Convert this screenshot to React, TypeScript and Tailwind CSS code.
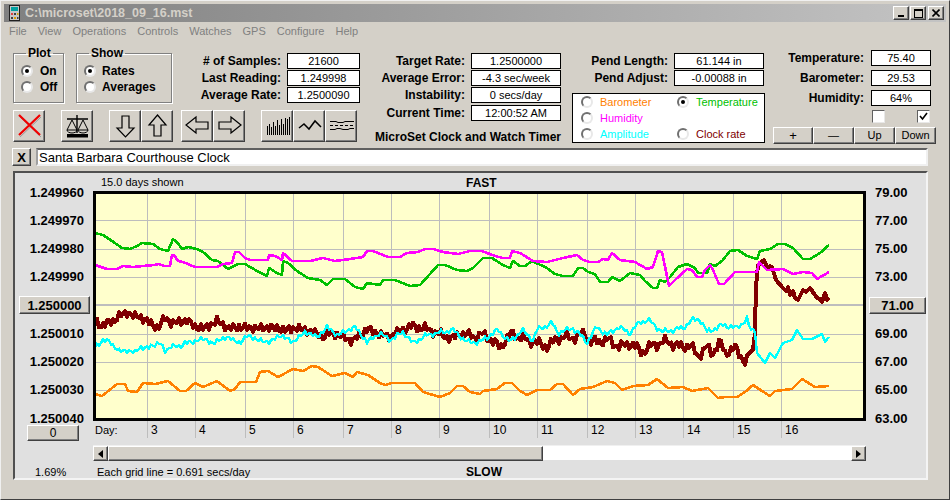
import type { ReactNode } from "react"

type Pt = [number, number]

const green: Pt[] = [[95,233],[103,235],[112,241],[122,248],[130,249],[137,246],[142,243],[153,244],[160,249],[168,251],[173,239],[177,242],[182,249],[188,247],[197,249],[203,252],[212,260],[218,261],[228,269],[238,264],[245,264],[257,271],[267,276],[269,268],[277,273],[282,275],[283,261],[288,263],[297,271],[308,278],[320,280],[327,285],[333,279],[345,279],[355,287],[363,289],[367,283],[380,285],[383,280],[395,280],[410,286],[420,285],[430,274],[438,265],[445,265],[457,270],[467,271],[473,268],[483,258],[492,258],[503,265],[510,268],[513,261],[520,266],[525,266],[532,261],[547,268],[555,274],[563,276],[573,276],[578,268],[583,268],[588,272],[595,274],[600,282],[608,282],[612,277],[620,281],[630,273],[640,275],[645,281],[653,288],[657,288],[660,280],[665,282],[670,277],[678,267],[687,264],[695,268],[698,273],[707,273],[710,264],[715,266],[722,261],[730,251],[738,250],[747,256],[757,259],[760,251],[770,249],[778,244],[785,244],[793,248],[803,259],[810,259],[820,253],[829,245]]

const magenta: Pt[] = [[95,265],[107,269],[117,269],[123,266],[133,267],[143,266],[155,265],[158,264],[165,266],[170,266],[172,255],[174,255],[178,261],[183,262],[195,267],[217,267],[223,264],[232,263],[235,252],[239,252],[245,258],[250,260],[268,260],[269,255],[275,256],[282,260],[283,253],[292,261],[303,261],[310,261],[323,258],[335,261],[350,259],[363,257],[367,251],[373,251],[388,257],[400,257],[407,253],[418,252],[425,249],[433,249],[443,252],[458,254],[470,251],[482,251],[495,256],[503,258],[510,258],[512,251],[520,253],[533,261],[547,262],[563,258],[577,255],[583,260],[590,262],[598,262],[603,259],[608,260],[612,253],[620,260],[635,262],[647,269],[653,267],[658,251],[662,252],[669,286],[675,280],[687,269],[692,270],[697,277],[702,277],[705,270],[710,265],[713,270],[719,284],[724,284],[735,272],[757,272],[759,262],[767,270],[783,269],[793,274],[803,272],[812,273],[817,279],[829,272]]

const orange: Pt[] = [[95,394],[102,396],[107,392],[117,384],[125,384],[128,391],[137,392],[143,383],[155,384],[168,381],[180,391],[186,391],[195,383],[203,387],[217,381],[230,391],[235,389],[240,382],[256,382],[260,372],[268,371],[278,377],[293,369],[303,371],[312,366],[318,367],[332,376],[345,373],[353,377],[357,372],[368,375],[380,383],[385,385],[392,383],[415,383],[423,392],[440,397],[450,393],[457,386],[463,386],[470,392],[480,394],[483,391],[497,389],[505,383],[512,383],[520,391],[527,395],[537,390],[550,390],[557,384],[563,384],[573,395],[580,389],[593,387],[607,381],[615,383],[622,390],[633,386],[648,385],[657,379],[668,388],[683,387],[692,391],[708,388],[718,398],[725,397],[737,397],[745,392],[753,385],[762,391],[770,396],[775,391],[792,389],[802,379],[815,387],[829,386]]

const redBase: Pt[] = [[95,320],[102,326],[110,322],[117,318],[127,312],[135,317],[140,316],[148,322],[158,328],[165,318],[172,323],[180,322],[187,320],[195,327],[205,328],[217,321],[228,328],[240,327],[250,328],[262,328],[270,327],[285,330],[295,328],[310,331],[325,337],[330,332],[353,341],[367,329],[387,337],[412,326],[427,329],[453,339],[460,333],[477,337],[483,334],[500,347],[512,333],[523,339],[535,342],[548,347],[557,338],[577,337],[585,333],[590,342],[608,340],[620,347],[630,343],[642,352],[653,345],[668,341],[678,347],[690,345],[698,356],[707,347],[712,354],[720,342],[725,353],[735,348],[746,363],[750,352],[754,352]]
const redTail: Pt[] = [[755,333],[755,328],[756,287],[758,265],[764,260],[768,269],[770,266],[772,267],[776,280],[783,288],[786,291],[788,287],[790,295],[793,291],[795,298],[798,300],[803,290],[806,292],[810,288],[815,295],[817,298],[820,299],[822,302],[825,293],[827,300],[829,298]]

const cyanBase: Pt[] = [[95,347],[103,340],[110,342],[120,352],[128,350],[135,353],[140,347],[148,348],[160,342],[165,352],[172,345],[180,348],[185,342],[193,343],[200,338],[213,343],[227,337],[233,340],[240,343],[248,335],[257,340],[270,342],[280,335],[293,342],[305,332],[318,337],[327,327],[337,335],[355,327],[367,342],[380,333],[390,340],[403,332],[413,343],[427,335],[453,330],[467,342],[480,342],[498,330],[510,342],[522,330],[533,340],[537,330],[552,323],[558,333],[573,328],[587,342],[597,327],[607,335],[618,327],[630,333],[640,322],[648,320],[663,332],[683,328],[692,320],[700,319],[707,332],[723,325],[737,328],[747,319],[750,330],[756,330]]
const cyanTail: Pt[] = [[757,353],[765,363],[770,353],[775,358],[783,343],[792,340],[797,330],[803,339],[812,339],[822,334],[825,342],[829,337]]

// base trace plus a fixed wobble, the raw readings are too noisy to trace by hand
function wobble(base: Pt[], amp: number, step: number): Pt[] {
  const out: Pt[] = []
  let j = 0
  for (let x = base[0][0]; x <= base[base.length - 1][0]; x += step) {
    while (j < base.length - 2 && base[j + 1][0] < x) j++
    const [x0, y0] = base[j]
    const [x1, y1] = base[j + 1]
    const y = y0 + ((y1 - y0) * (x - x0)) / (x1 - x0 || 1)
    const n = Math.sin(x * 1.15) + 0.6 * Math.sin(x * 0.45 + 1) + 0.3 * Math.sin(x * 2.7)
    out.push([x, y + amp * n])
  }
  return out
}

const toPoints = (pts: Pt[]) => pts.map((p) => p.join(",")).join(" ")

const days = [
  [147.5, 3], [195.5, 4], [245.5, 5], [293.5, 6], [343.5, 7], [391.5, 8], [439.5, 9],
  [489.5, 10], [537.5, 11], [587.5, 12], [635.5, 13], [683.5, 14], [733.5, 15], [781.5, 16],
]

const bevel = "border border-t-white border-l-white border-r-[#404040] border-b-[#404040] bg-[#d4d0c8] shadow-[inset_-1px_-1px_0_#808080]"

function Btn({ className, children }: { className: string; children?: ReactNode }) {
  return <div className={`${bevel} flex shrink-0 items-center justify-center ${className}`}>{children}</div>
}

function Radio({ on }: { on?: boolean }) {
  return (
    <span className="flex h-[12px] w-[12px] shrink-0 items-center justify-center rounded-full border-2 border-t-[#707070] border-l-[#707070] border-r-[#e8e8e8] border-b-[#e8e8e8] bg-white">
      {on && <span className="h-[4px] w-[4px] rounded-full bg-black" />}
    </span>
  )
}

function Readout({ label, value, labelW, boxW, className = "" }: { label: string; value: string; labelW: string; boxW: string; className?: string }) {
  return (
    <div className={`flex h-[16px] items-center ${className}`}>
      <span className={`whitespace-nowrap text-right text-[12px] font-bold ${labelW}`}>{label}</span>
      <span className={`ml-[6px] flex h-[16px] items-center justify-center border border-black bg-white ${boxW}`}>{value}</span>
    </div>
  )
}

function Group({ title, className, children }: { title: string; className: string; children: ReactNode }) {
  return (
    <fieldset className={`shrink-0 border border-[#808080] pl-[7px] text-[12px] font-bold shadow-[1px_1px_0_#fff,inset_1px_1px_0_#fff] ${className}`}>
      <legend className="ml-[5px] px-[2px] text-[12px] font-bold leading-[12px]">{title}</legend>
      {children}
    </fieldset>
  )
}

function AxisLabel({ children }: { children: ReactNode }) {
  return <span className="flex h-[14px] items-center">{children}</span>
}

function AppIcon() {
  return (
    <svg width="11" height="16" viewBox="0 0 11 16" className="shrink-0">
      <rect x="0.5" y="0.5" width="10" height="15" fill="#c8c8c8" stroke="#202020" />
      <rect x="2" y="2" width="7" height="4" fill="#00a0a0" />
      <rect x="2" y="8" width="2" height="2" fill="#e04040" />
      <rect x="5" y="8" width="2" height="2" fill="#404040" />
      <rect x="8" y="8" width="1.5" height="2" fill="#d0a000" />
      <rect x="2" y="12" width="2" height="2" fill="#404040" />
      <rect x="5" y="12" width="2" height="2" fill="#e0a000" />
      <rect x="8" y="12" width="1.5" height="2" fill="#404040" />
    </svg>
  )
}

function ToolIcon({ children }: { children: ReactNode }) {
  return (
    <svg width="30" height="30" viewBox="0 0 30 30" fill="none">
      {children}
    </svg>
  )
}

const arrowProps = { fill: "#d4d0c8", stroke: "#000", strokeWidth: 1.2, strokeLinejoin: "miter" as const }

export default function App() {
  return (
    <div className="flex h-[500px] w-[950px] flex-col overflow-hidden border border-t-[#f0f0f0] border-l-[#f0f0f0] border-r-[#404040] border-b-[#404040] bg-[#d4d0c8] px-[3px] pt-[3px] [font-family:Liberation_Sans,sans-serif] text-[11px] leading-none text-black">
      {/* title bar */}
      <div className="flex h-[18px] shrink-0 items-center bg-gradient-to-r from-[#808080] to-[#c4c4c4] pl-[5px] pr-[2px]">
        <AppIcon />
        <span className="ml-[5px] text-[12.5px] font-bold text-[#d4d0c8]">C:\microset\2018_09_16.mst</span>
        <div className="ml-auto flex">
          <Btn className="h-[14px] w-[16px] items-end pb-[2px]"><span className="h-[2px] w-[6px] bg-black" /></Btn>
          <Btn className="ml-[1px] h-[14px] w-[16px]"><span className="h-[9px] w-[9px] border border-t-2 border-black" /></Btn>
          <Btn className="ml-[2px] h-[14px] w-[16px]">
            <svg width="8" height="8" viewBox="0 0 8 8"><path d="M0.5 0.5L7.5 7.5M7.5 0.5L0.5 7.5" stroke="#000" strokeWidth="1.6" /></svg>
          </Btn>
        </div>
      </div>
      {/* menu */}
      <div className="flex h-[18px] shrink-0 items-center gap-[11px] pl-[5px] text-[#808080]">
        <span>File</span><span>View</span><span>Operations</span><span>Controls</span><span>Watches</span><span>GPS</span><span>Configure</span><span>Help</span>
      </div>

      {/* top controls */}
      <div className="flex h-[108px] shrink-0 pl-[9px]">
        <div className="w-[362px] shrink-0">
          <div className="flex h-[64px] pt-[7px]">
            <Group title="Plot" className="h-[56px] w-[51px]">
              <div className="flex items-center gap-[7px] pt-[6px]"><Radio on />On</div>
              <div className="mt-[4px] flex items-center gap-[7px]"><Radio />Off</div>
            </Group>
            <Group title="Show" className="ml-[12px] h-[56px] w-[96px]">
              <div className="flex items-center gap-[6px] pt-[6px]"><Radio on />Rates</div>
              <div className="mt-[4px] flex items-center gap-[6px]"><Radio />Averages</div>
            </Group>
            <div className="ml-[14px] flex flex-col gap-[1px] pt-[6px]">
              <Readout label="# of Samples:" value="21600" labelW="w-[95px]" boxW="w-[73px]" />
              <Readout label="Last Reading:" value="1.249998" labelW="w-[95px]" boxW="w-[73px]" />
              <Readout label="Average Rate:" value="1.2500090" labelW="w-[95px]" boxW="w-[73px]" />
            </div>
          </div>
          <div className="mt-[6px] flex h-[32px]">
            <Btn className="h-[32px] w-[32px]">
              <ToolIcon>
                <path d="M5 5L26 25M26 5L5 25" stroke="#9a9a9a" strokeWidth="1" transform="translate(1 1)" />
                <path d="M5 4L26 24M26 4L5 24" stroke="#f00000" strokeWidth="2.2" />
              </ToolIcon>
            </Btn>
            <Btn className="ml-[16px] h-[32px] w-[32px]">
              <ToolIcon>
                <path d="M15 4V22M5 8H26" stroke="#000" strokeWidth="1.4" />
                <path d="M10 9L5 19H15ZM21 9L16 19H26Z" stroke="#000" strokeWidth="1" fill="none" />
                <path d="M5 19a5 3 0 0 0 10 0M16 19a5 3 0 0 0 10 0" stroke="#000" strokeWidth="1" />
                <rect x="5" y="23" width="21" height="3.5" fill="#000" />
              </ToolIcon>
            </Btn>
            <Btn className="ml-[16px] h-[32px] w-[32px]">
              <ToolIcon><path d="M12 5H19V17H24L15.5 26L7 17H12Z" {...arrowProps} /></ToolIcon>
            </Btn>
            <Btn className="h-[32px] w-[32px]">
              <ToolIcon><path d="M15.5 4L24 14H19V25H12V14H7Z" {...arrowProps} /></ToolIcon>
            </Btn>
            <Btn className="ml-[8px] h-[32px] w-[32px]">
              <ToolIcon><path d="M4 14L14 6V11H26V18H14V22Z" {...arrowProps} /></ToolIcon>
            </Btn>
            <Btn className="h-[32px] w-[32px]">
              <ToolIcon><path d="M27 14L17 6V11H5V18H17V22Z" {...arrowProps} /></ToolIcon>
            </Btn>
            <Btn className="ml-[16px] h-[32px] w-[32px]">
              <ToolIcon>
                <path d="M5.5 15V24M7.5 13V24M9.5 16V24M11.5 11V24M13.5 15V24M15.5 9V24M17.5 14V24M19.5 8V24M21.5 13V24M23.5 7V24M25.5 8V24M27.5 6V24" stroke="#000" strokeWidth="1" />
              </ToolIcon>
            </Btn>
            <Btn className="h-[32px] w-[32px]">
              <ToolIcon><path d="M5 17L10 13L15 18L21 10L27 16" stroke="#000" strokeWidth="1.5" /></ToolIcon>
            </Btn>
            <Btn className="h-[32px] w-[32px]">
              <ToolIcon>
                <path d="M4 10.5H10L12 11.5H17L19 10.5H28M4 18.5H9L11 17.5H14L17 18.5H22L24 17.5H28" stroke="#000" strokeWidth="1" />
                <path d="M4 14.5H28" stroke="#000" strokeWidth="1" strokeDasharray="3 2" />
              </ToolIcon>
            </Btn>
          </div>
        </div>

        <div className="w-[197px] shrink-0 pt-[13px]">
          <div className="flex flex-col gap-[1px]">
            <Readout label="Target Rate:" value="1.2500000" labelW="w-[90px]" boxW="w-[90px]" />
            <Readout label="Average Error:" value="-4.3 sec/week" labelW="w-[90px]" boxW="w-[90px]" />
            <Readout label="Instability:" value="0 secs/day" labelW="w-[90px]" boxW="w-[90px]" />
            <Readout label="Current Time:" value="12:00:52 AM" labelW="w-[90px]" boxW="w-[90px]" className="mt-[1px]" />
          </div>
          <div className="mt-[10px] whitespace-nowrap text-[12px] font-bold">MicroSet Clock and Watch Timer</div>
        </div>

        <div className="w-[201px] shrink-0 pt-[13px]">
          <Readout label="Pend Length:" value="61.144 in" labelW="w-[96px]" boxW="w-[90px]" />
          <Readout label="Pend Adjust:" value="-0.00088 in" labelW="w-[96px]" boxW="w-[90px]" className="mt-[1px]" />
          <div className="mt-[7px] grid h-[50px] w-[193px] grid-cols-[96px_1fr] content-between border border-black bg-white py-[2px] pl-[8px]">
            <div className="flex items-center gap-[7px] text-[#ff8000]"><Radio />Barometer</div>
            <div className="flex items-center gap-[7px] text-[#00c000]"><Radio on />Temperature</div>
            <div className="col-span-2 flex items-center gap-[7px] text-[#ff00ff]"><Radio />Humidity</div>
            <div className="flex items-center gap-[7px] text-[#00ffff]"><Radio />Amplitude</div>
            <div className="flex items-center gap-[7px] text-[#800000]"><Radio />Clock rate</div>
          </div>
        </div>

        <div className="w-[164px] shrink-0 pt-[10px]">
          <Readout label="Temperature:" value="75.40" labelW="w-[91px]" boxW="w-[60px]" className="[&>span:last-child]:ml-[7px]" />
          <Readout label="Barometer:" value="29.53" labelW="w-[91px]" boxW="w-[60px]" className="mt-[4px] [&>span:last-child]:ml-[7px]" />
          <Readout label="Humidity:" value="64%" labelW="w-[91px]" boxW="w-[60px]" className="mt-[4px] [&>span:last-child]:ml-[7px]" />
          <div className="mt-[4px] flex pl-[99px]">
            <span className="h-[13px] w-[13px] border border-t-[#606060] border-l-[#606060] border-r-[#e8e8e8] border-b-[#e8e8e8] bg-white" />
            <span className="ml-[32px] flex h-[13px] w-[13px] items-center justify-center border border-t-[#606060] border-l-[#606060] border-r-[#e8e8e8] border-b-[#e8e8e8] bg-white">
              <svg width="9" height="9" viewBox="0 0 9 9"><path d="M1 4L3.5 7L8 1" stroke="#000" strokeWidth="1.6" fill="none" /></svg>
            </span>
          </div>
          <div className="mt-[4px] flex">
            <Btn className="h-[17px] w-[40px] text-[13px]">+</Btn>
            <Btn className="h-[17px] w-[41px]">—</Btn>
            <Btn className="h-[17px] w-[41px]">Up</Btn>
            <Btn className="h-[17px] w-[41px]">Down</Btn>
          </div>
        </div>
      </div>

      {/* watch name */}
      <div className="flex h-[18px] shrink-0 pl-[8px]">
        <Btn className="h-[18px] w-[19px] text-[13px] font-bold">X</Btn>
        <div className="ml-[5px] flex h-[18px] w-[892px] items-center border-2 border-t-[#606060] border-l-[#a0a0a0] border-r-[#f0f0f0] border-b-[#f0f0f0] bg-white pl-[1px] text-[13px]">Santa Barbara Courthouse Clock</div>
      </div>

      {/* chart panel */}
      <div className="ml-[9px] mt-[5px] flex h-[309px] w-[915px] shrink-0 flex-col border-2 border-t-[#505050] border-l-[#505050] border-r-[#f4f4f4] border-b-[#f4f4f4] bg-[#e0e0e0]">
        <div className="flex h-[18px] shrink-0 items-center pl-[86px] pt-[1px]">
          <span className="w-[365px]">15.0 days shown</span>
          <span className="text-[12px] font-bold">FAST</span>
        </div>
        <div className="flex shrink-0">
          <div className="flex w-[78px] shrink-0 flex-col">
            <div className="-mt-[6px] flex h-[240px] flex-col items-end justify-between pr-[9px] text-[13px] font-bold">
              <AxisLabel>1.249960</AxisLabel>
              <AxisLabel>1.249970</AxisLabel>
              <AxisLabel>1.249980</AxisLabel>
              <AxisLabel>1.249990</AxisLabel>
              <AxisLabel><Btn className="-mr-[6px] h-[18px] w-[71px]">1.250000</Btn></AxisLabel>
              <AxisLabel>1.250010</AxisLabel>
              <AxisLabel>1.250020</AxisLabel>
              <AxisLabel>1.250030</AxisLabel>
              <AxisLabel>1.250040</AxisLabel>
            </div>
            <Btn className="ml-[12px] h-[16px] w-[52px] text-[12px]">0</Btn>
          </div>
          <svg width="773" height="247" viewBox="93 191 773 247" className="shrink-0">
            <rect x="94.5" y="192.5" width="770" height="227" fill="#ffffcc" />
            {[220, 249, 277, 334, 362, 390].map((y) => (
              <line key={y} x1="95" x2="864" y1={y + 0.5} y2={y + 0.5} stroke="#bdbdbd" />
            ))}
            <line x1="95" x2="864" y1="305" y2="305" stroke="#bdbdbd" strokeWidth="2" />
            {days.map(([x, d]) => (
              <g key={d}>
                <line x1={x} x2={x} y1="193" y2="438" stroke="#bdbdbd" />
                <text x={x + 3.5} y="434" fontSize="12" fill="#000">{d}</text>
              </g>
            ))}
            <text x="95" y="434" fontSize="11" fill="#000">Day:</text>
            <g fill="none" strokeLinejoin="round" shapeRendering="crispEdges">
              <polyline points={toPoints([...wobble(redBase, 3.4, 2), ...redTail])} stroke="#800000" strokeWidth="4" />
              <polyline points={toPoints(green)} stroke="#00c000" strokeWidth="2.6" />
              <polyline points={toPoints(magenta)} stroke="#ff00ff" strokeWidth="2.6" />
              <polyline points={toPoints(orange)} stroke="#ff8000" strokeWidth="2.6" />
              <polyline points={toPoints([...wobble(cyanBase, 1.8, 2), ...cyanTail])} stroke="#00ffff" strokeWidth="2.4" />
            </g>
            <rect x="94.5" y="192.5" width="770" height="227" fill="none" stroke="#000" strokeWidth="3" />
          </svg>
          <div className="w-[60px] shrink-0">
            <div className="-mt-[6px] flex h-[240px] flex-col justify-between pl-[9px] text-[13px] font-bold">
              <AxisLabel>79.00</AxisLabel>
              <AxisLabel>77.00</AxisLabel>
              <AxisLabel>75.00</AxisLabel>
              <AxisLabel>73.00</AxisLabel>
              <AxisLabel><Btn className="-ml-[6px] h-[17px] w-[57px]">71.00</Btn></AxisLabel>
              <AxisLabel>69.00</AxisLabel>
              <AxisLabel>67.00</AxisLabel>
              <AxisLabel>65.00</AxisLabel>
              <AxisLabel>63.00</AxisLabel>
            </div>
          </div>
        </div>
        {/* scrollbar */}
        <div className="ml-[78px] mt-[4px] flex h-[15px] w-[773px] shrink-0 border-t border-[#f0f0f0] bg-white">
          <Btn className="h-[15px] w-[15px]"><span className="h-0 w-0 border-y-[4px] border-r-[5px] border-y-transparent border-r-black" /></Btn>
          <Btn className="h-[15px] w-[435px] border-l-[#d4d0c8] border-t-[#d4d0c8]" />
          <Btn className="ml-auto h-[15px] w-[15px]"><span className="h-0 w-0 border-y-[4px] border-l-[5px] border-y-transparent border-l-black" /></Btn>
        </div>
        <div className="mt-[5px] flex h-[14px] shrink-0 items-center">
          <span className="w-[82px] pl-[20px]">1.69%</span>
          <span className="w-[369px]">Each grid line = 0.691 secs/day</span>
          <span className="text-[12px] font-bold">SLOW</span>
        </div>
      </div>
    </div>
  )
}
